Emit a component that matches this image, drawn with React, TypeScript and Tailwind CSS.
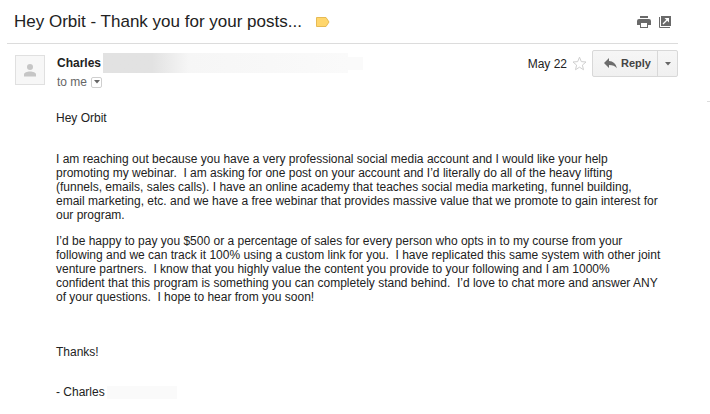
import type { ReactNode } from "react";

// The sender wrapped the mail by hand, so the line breaks are part of the text.
const paragraphs = [
  `I am reaching out because you have a very professional social media account and I would like your help
promoting my webinar.\u00a0 I am asking for one post on your account and I’d literally do all of the heavy lifting
(funnels, emails, sales calls). I have an online academy that teaches social media marketing, funnel building,
email marketing, etc. and we have a free webinar that provides massive value that we promote to gain interest for
our program.`,
  `I’d be happy to pay you $500 or a percentage of sales for every person who opts in to my course from your
following and we can track it 100% using a custom link for you.\u00a0 I have replicated this same system with other joint
venture partners.\u00a0 I know that you highly value the content you provide to your following and I am 1000%
confident that this program is something you can completely stand behind.\u00a0 I’d love to chat more and answer ANY
of your questions.\u00a0 I hope to hear from you soon!`,
];

function IconButton({ label, className, children }: { label: string; className?: string; children: ReactNode }) {
  return (
    <button type="button" aria-label={label} className={className}>
      {children}
    </button>
  );
}

function LabelIcon() {
  return (
    <svg width="14" height="12" viewBox="0 0 14 12">
      <path d="M.5 1.500h9.500l3 4.500-3 4.500H.5z" fill="#ffd66c" stroke="#e6ba55" />
    </svg>
  );
}

function PrintIcon() {
  return (
    <svg width="14" height="12" viewBox="0 0 14 12" fill="#6a6a6a">
      <path d="M3 0h8v2H3zM2 3h10a2 2 0 0 1 2 2v4h-3V7H3v2H0V5a2 2 0 0 1 2-2z" />
      <path d="M3 6h8v6H3z" />
      <path d="M4 7h6v4H4z" fill="#fff" />
    </svg>
  );
}

function NewWindowIcon() {
  return (
    <svg width="12" height="12" viewBox="0 0 12 12">
      <path d="M.5 1v10.500H11" fill="none" stroke="#6a6a6a" />
      <path d="M2 0h10v10H2z" fill="#6a6a6a" />
      <path d="M4 8l4-4" fill="none" stroke="#fff" strokeWidth="1.300" />
      <path d="M5.500 2H10v4.500z" fill="#fff" />
    </svg>
  );
}

function PersonIcon() {
  return (
    <svg width="12" height="13" viewBox="0 0 12 13" fill="#c6c6c6">
      <circle cx="6" cy="3" r="3" />
      <path d="M0 12.500V10.500C0 8.700 3 7.500 6 7.500s6 1.200 6 3v2z" />
    </svg>
  );
}

function StarIcon() {
  return (
    <svg width="15" height="15" viewBox="0 0 15 15" fill="#fff" stroke="#cfcfcf">
      <path d="M7.500 1.200l1.800 4.400 4.700.4-3.600 3.100 1.100 4.600-4-2.500-4 2.500 1.100-4.600L1 6l4.700-.4z" />
    </svg>
  );
}

function ReplyIcon() {
  return (
    <svg width="13" height="11" viewBox="0 0 13 11" fill="#6c6c6c">
      <path d="M5 0v3c4 .2 7 2.500 7.800 7.200C11 7.800 8.800 7 5 7v3L0 5z" />
    </svg>
  );
}

function CaretIcon() {
  return (
    <svg width="6" height="4" viewBox="0 0 6 4" fill="#666">
      <path d="M0 0h6L3 3.500z" />
    </svg>
  );
}

export default function App() {
  return (
    <div className="flex min-h-screen justify-between bg-white font-['Liberation_Sans',Arial,sans-serif] text-[#222]">
      <main className="min-w-0 flex-1 pl-[7px]">
        <header className="flex h-11 items-center border-b border-[#dcdcdc] px-[7px]">
          <h1 className="text-[17px] leading-5">Hey Orbit - Thank you for your posts...</h1>
          <IconButton label="Important" className="ml-[14px]">
            <LabelIcon />
          </IconButton>
          <div className="ml-auto flex items-center gap-2">
            <IconButton label="Print all">
              <PrintIcon />
            </IconButton>
            <IconButton label="In new window">
              <NewWindowIcon />
            </IconButton>
          </div>
        </header>

        <section className="flex pt-[6px] pl-2">
          <div className="mt-[5px] flex size-[30px] shrink-0 items-center justify-center border border-[#e0e0e0] bg-[#f7f7f7]">
            <PersonIcon />
          </div>
          <div className="ml-3 min-w-0 flex-1">
            <div className="flex h-[26px] items-center">
              <span className="text-xs font-bold">Charles</span>
              <span className="ml-[2px] h-5 w-[245px] bg-linear-to-r from-[#e2e2e2] from-20% via-[#f6f6f6] via-35% to-[#fafafa]" />
              <span className="h-[13px] w-[15px] bg-[#fafafa]" />
            </div>
            <div className="flex h-3 items-center text-xs text-[#666]">
              to me
              <IconButton
                label="Show details"
                className="ml-1 flex size-[11px] items-center justify-center rounded-xs border border-[#cfcfcf]"
              >
                <CaretIcon />
              </IconButton>
            </div>
          </div>
          <div className="flex h-[27px] items-center">
            <time className="text-xs">May 22</time>
            <IconButton label="Star" className="mx-[5px]">
              <StarIcon />
            </IconButton>
            <div className="flex h-[27px] rounded-xs border border-[#d8d8d8] bg-linear-to-b from-[#f6f6f6] to-[#f0f0f0]">
              <button type="button" className="flex items-center gap-1 pr-[6px] pl-[11px] text-[11px] font-bold text-[#444]">
                <ReplyIcon />
                Reply
              </button>
              <IconButton label="More" className="flex w-5 items-center justify-center border-l border-[#d8d8d8]">
                <CaretIcon />
              </IconButton>
            </div>
          </div>
        </section>

        <article className="mt-[23px] pl-[49px] text-xs leading-[14px]">
          <p>Hey Orbit</p>
          <div className="mt-[27px] space-y-3">
            {paragraphs.map((text) => (
              <p key={text} className="whitespace-pre-line">
                {text}
              </p>
            ))}
          </div>
          <p className="mt-[41px]">Thanks!</p>
          <p className="mt-[26px] flex items-center gap-[2px]">
            - Charles
            <span className="h-[13px] w-[70px] bg-[#fafafa]" />
          </p>
        </article>
      </main>
      <aside className="w-8 shrink-0 pt-[101px]">
        <hr className="ml-auto w-[3px] border-[#dcdcdc]" />
      </aside>
    </div>
  );
}
